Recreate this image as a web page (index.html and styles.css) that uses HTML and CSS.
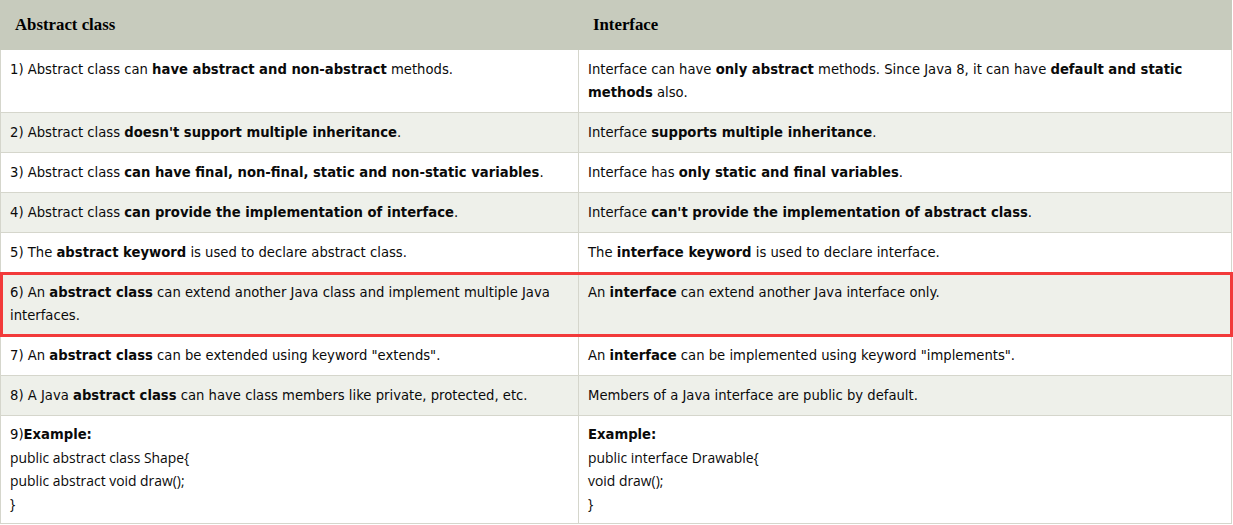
FILE: index.html
```html
<!DOCTYPE html>
<html>
<head>
<meta charset="utf-8">
<link rel="stylesheet" href="styles.css">
</head>
<body>
<table class="cmp">
  <colgroup><col class="c1"><col class="c2"></colgroup>
  <thead>
    <tr><th>Abstract class</th><th>Interface</th></tr>
  </thead>
  <tbody>
    <tr><td>1) Abstract class can <b>have abstract and non-abstract</b> methods.</td><td>Interface can have <b>only abstract</b> methods. Since Java 8, it can have <b>default and static methods</b> also.</td></tr>
    <tr class="alt"><td>2) Abstract class <b>doesn't support multiple inheritance</b>.</td><td>Interface <b>supports multiple inheritance</b>.</td></tr>
    <tr><td>3) Abstract class <b>can have final, non-final, static and non-static variables</b>.</td><td>Interface has <b>only static and final variables</b>.</td></tr>
    <tr class="alt"><td>4) Abstract class <b>can provide the implementation of interface</b>.</td><td>Interface <b>can't provide the implementation of abstract class</b>.</td></tr>
    <tr><td>5) The <b>abstract keyword</b> is used to declare abstract class.</td><td>The <b>interface keyword</b> is used to declare interface.</td></tr>
    <tr class="alt hl"><td>6) An <b>abstract class</b> can extend another Java class and implement multiple Java interfaces.</td><td>An <b>interface</b> can extend another Java interface only.</td></tr>
    <tr><td>7) An <b>abstract class</b> can be extended using keyword "extends".</td><td>An <b>interface</b> can be implemented using keyword "implements".</td></tr>
    <tr class="alt"><td>8) A Java <b>abstract class</b> can have class members like private, protected, etc.</td><td>Members of a Java interface are public by default.</td></tr>
    <tr>
      <td class="code"><div>9)<b>Example:</b></div><div class="ln">public abstract class Shape{</div><div class="ln">public abstract void draw();</div><div class="ln">}</div></td>
      <td class="code"><div><b>Example:</b></div><div class="ln">public interface Drawable{</div><div class="ln">void draw();</div><div class="ln">}</div></td>
    </tr>
  </tbody>
</table>
</body>
</html>
```

FILE: styles.css
```css
html, body { margin: 0; padding: 0; background: #fff; }
.cmp {
  width: 1232px;
  border-collapse: collapse;
  table-layout: fixed;
  font-family: "DejaVu Sans", Verdana, sans-serif;
  font-size: 13.2px;
  color: #0a0a0a;
}
.c1 { width: 578px; }
.cmp th {
  background: #c7cbbd;
  font-family: "Liberation Serif", "Times New Roman", serif;
  font-size: 16.8px;
  font-weight: bold;
  text-align: left;
  line-height: 20px;
  padding: 14px 14px;
  border: 1px solid #c7cbbd;
  color: #000;
}
.cmp td {
  border: 1px solid #d5d6cc;
  padding: 8px 9px;
  line-height: 23px;
  vertical-align: top;
}
.cmp tr.alt td { background: #eef0ea; }
.cmp b { font-weight: bold; }
.cmp tr.hl { outline: 3px solid #f23a3a; outline-offset: -2px; }
.cmp td.code { padding-top: 7px; padding-bottom: 8px; }
.cmp td.code .ln {
  font-family: "Open Sans", "Lato", sans-serif;
  font-size: 13.9px;
  line-height: 23px;
}
```
